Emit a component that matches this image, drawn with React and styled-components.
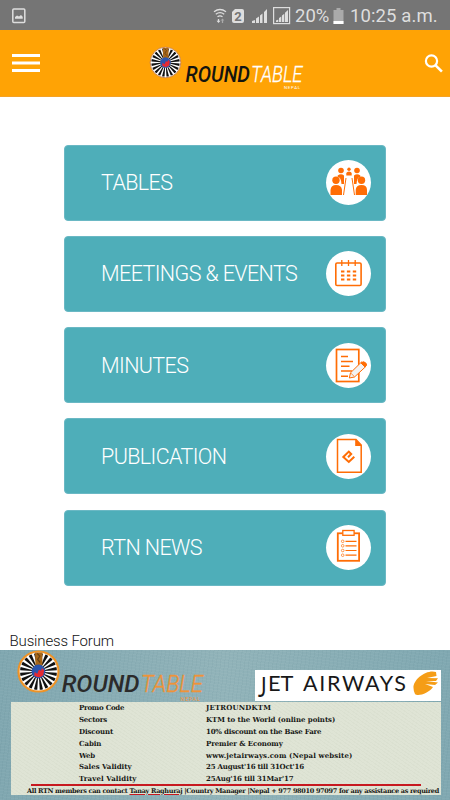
import React, { useState } from "react";
import styled, { createGlobalStyle } from "styled-components";

const GlobalStyle = createGlobalStyle`
	body {
		font-family: Roboto, sans-serif;
		margin: 0;
		padding: 0;
		background: #fff;
	}

	* {
		box-sizing: border-box;
	}
`;

const orange = "#ff6d05";

const offerRows = [
	{ label: "Promo Code", value: "JETROUNDKTM", labelTracking: -0.25, valueTracking: 0.15 },
	{ label: "Sectors", value: "KTM to the World (online points)", labelTracking: -0.2, valueTracking: -0.05 },
	{ label: "Discount", value: "10% discount on the Base Fare", labelTracking: -0.1, valueTracking: -0.2 },
	{ label: "Cabin", value: "Premier & Economy", labelTracking: -0.1, valueTracking: -0.1 },
	{ label: "Web", value: "www.jetairways.com (Nepal website)", labelTracking: -0.3, valueTracking: 0.12 },
	{ label: "Sales Validity", value: "25 August'16 till 31Oct'16", labelTracking: 0, valueTracking: -0.2 },
	{ label: "Travel Validity", value: "25Aug'16 till 31Mar'17", labelTracking: 0.1, valueTracking: -0.15 },
];

function Wheel({ size, rim, rimWidth }) {
	const spokes = Array.from({ length: 20 }, (_, i) => i * 18);
	return (
		<svg width={size} height={size} viewBox="-50 -50 100 100">
			<circle r="46.5" fill="#fff" stroke={rim} strokeWidth={rimWidth} />
			{spokes.map((angle) => (
				<path key={angle} d="M-1 -13 L-3.8 -42.5 Q0 -43.5 3.8 -42.5 L1 -13Z" fill="#111" transform={`rotate(${angle + 9})`} />
			))}
			<path d="M-8 -44 H9 V-14 H-7Z" fill="#a76618" />
			<path d="M-3 -42 L3 -36 L-2 -28 L4 -21" stroke="#6b4314" strokeWidth="3" fill="none" />
			<circle r="16" fill="#2b55ad" />
			<path d="M-10 10 L-9 1 L-3 5 L1 -4 L6 -2 L8 -8 L13 -3 L11 9 Q2 17 -10 10Z" fill="#e52932" />
		</svg>
	);
}

function RoundTableName({ width, height, fontSize, dark, light }) {
	return (
		<svg width={width} height={height} viewBox="0 0 120 29" overflow="visible">
			<g fontFamily="Roboto, sans-serif" fontStyle="italic">
				<text x="0.5" y="20" fontSize={fontSize} fontWeight="500" fill={dark} textLength="64.5" lengthAdjust="spacingAndGlyphs">ROUND</text>
				<text x="66" y="20" fontSize={fontSize} fontWeight="300" fill={light} stroke={light} strokeWidth=".3" textLength="51.5" lengthAdjust="spacingAndGlyphs">TABLE</text>
				<text x="99" y="27" fontSize="4.3" fontStyle="normal" fill={light} textLength="16">NEPAL</text>
			</g>
		</svg>
	);
}

function TablesIcon() {
	return (
		<svg width="45" height="45" viewBox="0 0 45 45" fill={orange}>
			<circle cx="15" cy="10.5" r="2.8" />
			<path d="M11.7 15.5 Q15 13 18 15.5 V24 H15.5 Q15 17 11.7 17Z" />
			<circle cx="31" cy="10.5" r="2.8" />
			<path d="M34.3 15.5 Q31 13 28 15.5 V24 H30.5 Q31 17 34.3 17Z" />
			<circle cx="10" cy="20.3" r="3.7" />
			<path d="M4.5 35 V30 Q5 25 10 25 Q15.5 25 16 30 V35Z" />
			<circle cx="35.5" cy="20.3" r="3.7" />
			<path d="M29.7 35 V30 Q30 25 35.5 25 Q41 25 41 30 V35Z" />
			<circle cx="23" cy="9.3" r="1.7" />
			<path d="M20.3 15.5 V13 Q21 11.5 23 11.5 Q25 11.5 25.7 13 V15.5Z" />
			<path d="M20 18 L17.5 35 M26 18 L28.5 35" fill="none" stroke={orange} strokeWidth="1" />
		</svg>
	);
}

function CalendarIcon() {
	return (
		<svg width="45" height="45" viewBox="0 0 45 45" fill="none" stroke={orange}>
			<rect x="9.8" y="12" width="25.3" height="22.5" rx="1.3" strokeWidth="1.6" />
			<path d="M15.8 9 V15 M22.5 9 V15 M29.2 9 V15" strokeWidth="1.3" />
			<path d="M15 20.4 H30.3 M15 24.5 H30.3 M15 28.6 H30.3" strokeWidth="2" strokeDasharray="3.4 2.5" />
		</svg>
	);
}

function MinutesIcon() {
	return (
		<svg width="45" height="45" viewBox="0 0 45 45" fill="none" stroke={orange}>
			<rect x="10.5" y="6.5" width="22.3" height="32" strokeWidth="1.7" />
			<path d="M15 13.5 H22 M15 18.5 H27 M15 23.2 H23.5 M15 28 H26 M15 33.3 H22" strokeWidth="1.5" />
			<path d="M23.3 35 L24.5 29.8 L35.5 19 L40 23.3 L28.5 34Z" fill="#f2f2f2" strokeWidth="1" />
			<path d="M35 20 Q37.5 17.5 39.8 20 Q41.8 22 39 24Z" fill={orange} strokeWidth="1" />
			<path d="M24.7 30 L28.5 33.7" strokeWidth=".7" />
		</svg>
	);
}

function PublicationIcon() {
	return (
		<svg width="45" height="45" viewBox="0 0 45 45" fill="none" stroke={orange}>
			<path d="M11.5 5.5 H30 L35.2 11 V38.3 H11.5Z" strokeWidth="1.5" />
			<path d="M29.2 5 V12 H35.8Z" fill={orange} stroke="none" />
			<path d="M22 23.2 L25.2 20 L22.8 17.6 L17.3 23 L22.8 28 L28.3 22.7" strokeWidth="2" />
		</svg>
	);
}

function NewsIcon() {
	return (
		<svg width="45" height="45" viewBox="0 0 45 45" fill="none" stroke={orange}>
			<rect x="11.8" y="8.3" width="21.3" height="27.5" strokeWidth="1.8" />
			<rect x="16.8" y="5.5" width="11.3" height="4.8" fill="#fff" strokeWidth="1.3" />
			<path d="M19.5 16.3 H30.5 M19.5 20.8 H30.5 M19.5 25.5 H30.5 M19.5 30.2 H30.5" strokeWidth="1.2" />
			{[16.3, 20.8, 25.5, 30.2].map((y) => (
				<circle key={y} cx="16.7" cy={y} r="1.3" strokeWidth=".7" />
			))}
		</svg>
	);
}

const menuItems = [
	{ title: "TABLES", Icon: TablesIcon },
	{ title: "MEETINGS & EVENTS", Icon: CalendarIcon },
	{ title: "MINUTES", Icon: MinutesIcon },
	{ title: "PUBLICATION", Icon: PublicationIcon },
	{ title: "RTN NEWS", Icon: NewsIcon },
];

function StatusIcons() {
	return (
		<svg width="80" height="20" viewBox="0 0 80 20" fill="#dedede">
			<g fill="none" stroke="#dedede" strokeWidth="1.3">
				<path d="M1 5.8 Q7 1.2 13 5.8 M2.8 8.3 Q7 5 11.2 8.3 M4.5 10.7 Q7 8.9 9.5 10.7" />
				<path d="M5.5 13 V16" />
				<path d="M9.5 14 V17" stroke="#aaa" />
			</g>
			<path d="M3.5 14.7 H7.5 L5.5 17Z" />
			<path d="M7.7 14.5 H11.3 L9.5 12.5Z" fill="#aaa" />
			<path d="M22 3 H29 Q31 3 31 5 V15 Q31 17 29 17 H21 Q19 17 19 15 V6Z" />
			<text x="25" y="14.5" fontFamily="Roboto, sans-serif" fontSize="13" fontWeight="700" fill="#757575" textAnchor="middle">2</text>
			<path d="M39 17 V15 L42 14 V17Z M43 17 V12.5 L46 10.5 V17Z M47 17 V9.5 L49.5 7.5 V17Z M51 17 V6 L54 3 V17Z" />
			<rect x="60.6" y="1.6" width="16" height="16" fill="none" stroke="#dedede" strokeWidth="1.2" />
			<path d="M63 16 V14.5 L65.3 13.5 V16Z M66 16 V12 L68.3 10.5 V16Z M69 16 V9.5 L71.3 7.7 V16Z M72 16 V6.7 L75 4 V16Z" />
		</svg>
	);
}

function JetLogo() {
	return (
		<svg width="186" height="31" viewBox="0 0 186 31" overflow="visible">
			<g fontFamily="Lato, sans-serif" fontSize="21.5" fill="#181818">
				<text x="3" y="26.5" fontSize="27" textLength="8.5" lengthAdjust="spacingAndGlyphs">J</text>
				<text x="13" y="21.3" textLength="25.5" lengthAdjust="spacingAndGlyphs">ET</text>
				<text x="48" y="21.3" textLength="103" lengthAdjust="spacing">AIRWAYS</text>
			</g>
			<path d="M158.5 18 C158 9 172 -1 181 2 L181.5 6 L172 8 L183 8.3 L181 11 L171 11 L183 12.5 L180 15 L170 14 L178 17 C174 23 163 27 160 24 Q158.5 21 158.5 18Z" fill="#f59d16" />
		</svg>
	);
}

function App() {
	const [selected, setSelected] = useState(null);

	return (
		<>
			<GlobalStyle />
			<AppContainer>
				<StatusBar>
					<svg width="14" height="16" viewBox="0 0 14 16" fill="none" stroke="#dedede" strokeWidth="1.5">
						<rect x=".8" y="1" width="12" height="13.5" rx="1" />
						<path d="M3 10.7 V9 L5 7.5 L7 8.5 L9 7 L10.7 8.7 V10.7Z" fill="#dedede" stroke="none" />
					</svg>
					<StatusGroup>
						<StatusIcons />
						<Battery>20%</Battery>
						<svg width="11" height="16" viewBox="0 0 11 16">
							<path d="M3.5 0 H7.5 V2 H10.5 V16 H.5 V2 H3.5Z" fill="#aaa" />
							<path d="M.5 13 H10.5 V16 H.5Z" fill="#fff" />
						</svg>
						<Clock>10:25 a.m.</Clock>
					</StatusGroup>
				</StatusBar>
				<Header>
					<IconButton aria-label="Menu">
						<svg width="28" height="20" viewBox="0 0 28 20" fill="#fff">
							<path d="M0 1 H28 V4 H0Z M0 8.5 H28 V11.5 H0Z M0 16 H28 V19 H0Z" />
						</svg>
					</IconButton>
					<Brand>
						<Wheel size={33} rim="#c9824a" rimWidth="3" />
						<BrandName>
							<RoundTableName width={120} height={29} fontSize={22.5} dark="#14140f" light="#fff" />
						</BrandName>
					</Brand>
					<IconButton aria-label="Search">
						<svg width="19" height="19" viewBox="0 0 19 19" fill="none" stroke="#fff">
							<circle cx="7.5" cy="7" r="5.6" strokeWidth="2.2" />
							<path d="M11.6 11.3 L17.9 17.6" strokeWidth="2.6" />
						</svg>
					</IconButton>
				</Header>
				<Menu>
					{menuItems.map(({ title, Icon }) => (
						<MenuCard key={title} aria-pressed={selected === title} onClick={() => setSelected(title)}>
							<MenuTitle>{title}</MenuTitle>
							<IconCircle>
								<Icon />
							</IconCircle>
						</MenuCard>
					))}
				</Menu>
				<ForumTitle>Business Forum</ForumTitle>
				<Banner>
					<BannerTop>
						<Wheel size={43} rim="#ee9327" rimWidth="5" />
						<BannerName>
							<RoundTableName width={145} height={35} fontSize={20.3} dark="#2b2b2b" light="#ef9338" />
						</BannerName>
						<JetBox>
							<JetLogo />
						</JetBox>
					</BannerTop>
					<OfferPanel>
						{offerRows.map((row) => (
							<OfferRow key={row.label}>
								<OfferText $tracking={row.labelTracking}>{row.label}</OfferText>
								<OfferText $tracking={row.valueTracking}>{row.value}</OfferText>
							</OfferRow>
						))}
						<RedLine />
						<Contact>
							All RTN members can contact <u>Tanay Raghuraj</u> |Country Manager |Nepal + 977 98010 97097 for any assistance as required
						</Contact>
					</OfferPanel>
				</Banner>
			</AppContainer>
		</>
	);
}

export default App;

const AppContainer = styled.div`
	width: 450px;
	height: 800px;
	display: flex;
	flex-direction: column;
	overflow: hidden;
	background: #fff;
`;

const StatusBar = styled.div`
	height: 30px;
	flex: none;
	display: flex;
	align-items: center;
	justify-content: space-between;
	padding: 1px 12px 0;
	background: #757575;
	color: #dedede;
`;

const StatusGroup = styled.div`
	display: flex;
	align-items: center;
`;

const Battery = styled.span`
	width: 35px;
	margin: 0 3px 0 2px;
	font-size: 18.5px;
`;

const Clock = styled.span`
	width: 88px;
	margin-left: 6px;
	font-size: 18.5px;
	letter-spacing: 0.1px;
	white-space: nowrap;
`;

const Header = styled.header`
	height: 67px;
	flex: none;
	display: flex;
	align-items: center;
	justify-content: space-between;
	padding: 0 7px 0 12px;
	background: #ffa305;
	border-bottom: 1px solid #f4a226;
`;

const IconButton = styled.button`
	display: flex;
	padding: 0;
	border: none;
	background: none;
	cursor: pointer;
`;

const Brand = styled.div`
	height: 66px;
	display: flex;
	align-items: flex-start;
	padding-top: 16px;
	margin-right: 11px;
`;

const BrandName = styled.div`
	padding-top: 16px;
	margin-left: 3px;
`;

const Menu = styled.main`
	height: 529px;
	flex: none;
	display: flex;
	flex-direction: column;
	align-items: center;
	gap: 15.25px;
	padding-top: 47.5px;
`;

const MenuCard = styled.button`
	width: 322px;
	height: 76px;
	flex: none;
	display: flex;
	align-items: center;
	justify-content: space-between;
	padding: 0 14.5px 0 36px;
	border: 1px solid #6ab8c4;
	border-radius: 4px;
	background: #4eaeb9;
	color: #fff;
	font-family: Roboto, sans-serif;
	cursor: pointer;
`;

const MenuTitle = styled.span`
	font-size: 21.5px;
	font-weight: 300;
	letter-spacing: -0.6px;
	white-space: nowrap;
`;

const IconCircle = styled.span`
	width: 45px;
	height: 45px;
	display: flex;
	border-radius: 50%;
	background: #fff;
`;

const ForumTitle = styled.h2`
	height: 24px;
	flex: none;
	margin: 0;
	padding: 5px 0 0 9.5px;
	font-size: 15px;
	line-height: 20px;
	font-weight: 300;
	letter-spacing: -0.15px;
	color: #111;
`;

const Banner = styled.section`
	height: 150px;
	flex: none;
	padding: 0 9px 0 11px;
	background:
		repeating-linear-gradient(8deg, rgba(255, 255, 255, 0.035) 0 1px, transparent 1px 3px),
		repeating-linear-gradient(97deg, rgba(20, 60, 75, 0.035) 0 1px, transparent 1px 4px),
		linear-gradient(90deg, #80a7b0, #91b3b9 50%, #80a8b1);
`;

const BannerTop = styled.div`
	height: 52px;
	display: flex;
	align-items: flex-start;
	padding-left: 6px;
`;

const BannerName = styled.div`
	padding-top: 18px;
	margin-left: 1px;
	height: 52px;
`;

const JetBox = styled.div`
	width: 186px;
	height: 31px;
	margin: 20px 0 0 auto;
	background: #fff;
`;

const OfferPanel = styled.div`
	height: 93px;
	background:
		repeating-linear-gradient(35deg, rgba(100, 115, 80, 0.035) 0 1px, transparent 1px 3px),
		#dfe4d5;
	color: #181916;
	font-family: "DejaVu Serif", serif;
	font-size: 7px;
	font-weight: 700;
	line-height: 11.9px;
`;

const OfferRow = styled.div`
	height: 11.9px;
	display: grid;
	grid-template-columns: 127px 1fr;
	padding-left: 68px;
`;

const OfferText = styled.span`
	white-space: nowrap;
	letter-spacing: ${({ $tracking }) => $tracking}px;
`;

const RedLine = styled.div`
	width: 390px;
	height: 1.5px;
	margin: -1px 0 0 20px;
	background: #c71920;
`;

const Contact = styled.p`
	margin: 0 0 0 16px;
	line-height: 11px;
	font-size: 6.5px;
	letter-spacing: -0.31px;
	white-space: nowrap;

	u {
		text-decoration-color: #c71920;
		text-decoration-thickness: 1px;
		text-underline-offset: 1px;
	}
`;
